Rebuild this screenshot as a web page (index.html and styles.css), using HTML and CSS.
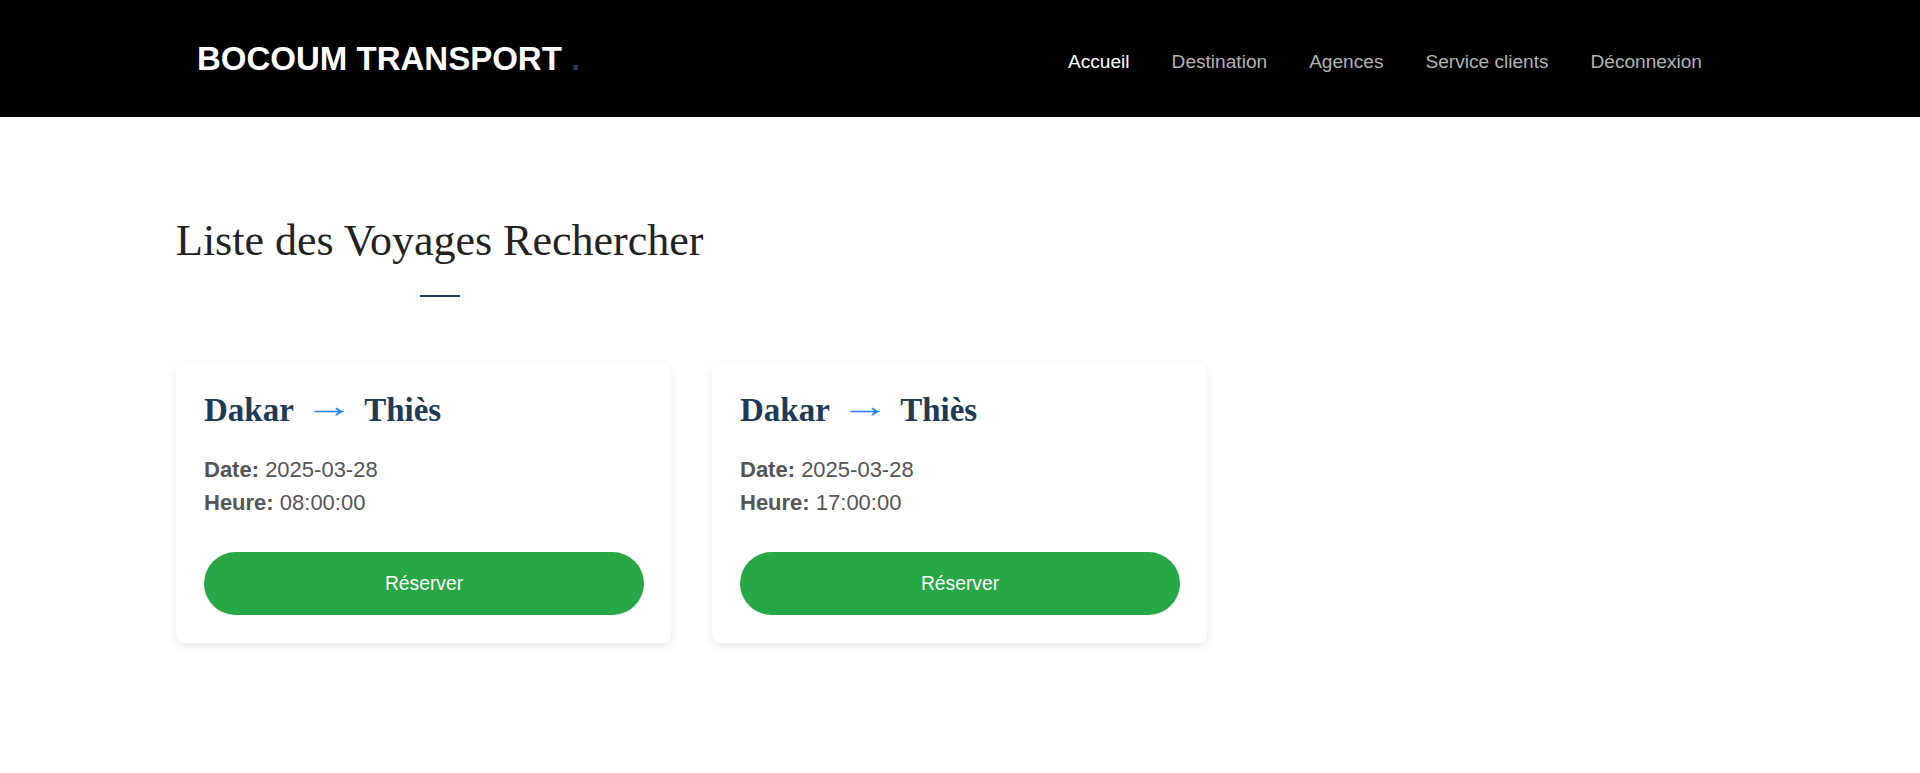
FILE: index.html
```html
<!DOCTYPE html>
<html lang="fr">
<head>
<meta charset="utf-8">
<title>Bocoum Transport</title>
<link rel="stylesheet" href="styles.css">
</head>
<body>
<header class="site-header">
  <a class="brand" href="#">BOCOUM TRANSPORT <span class="brand-dot">.</span></a>
  <nav class="main-nav">
    <a class="nav-link active" href="#">Accueil</a>
    <a class="nav-link" href="#">Destination</a>
    <a class="nav-link" href="#">Agences</a>
    <a class="nav-link" href="#">Service clients</a>
    <a class="nav-link" href="#">Déconnexion</a>
  </nav>
</header>
<main class="content">
  <h2 class="section-title">Liste des Voyages Rechercher</h2>
  <div class="trip-grid">
    <div class="trip-card">
      <h3 class="trip-route">Dakar <span class="arrow">→</span> Thiès</h3>
      <p class="trip-info"><strong>Date:</strong> 2025-03-28<br><strong>Heure:</strong> 08:00:00</p>
      <a class="btn-reserve" href="#">Réserver</a>
    </div>
    <div class="trip-card">
      <h3 class="trip-route">Dakar <span class="arrow">→</span> Thiès</h3>
      <p class="trip-info"><strong>Date:</strong> 2025-03-28<br><strong>Heure:</strong> 17:00:00</p>
      <a class="btn-reserve" href="#">Réserver</a>
    </div>
  </div>
</main>
</body>
</html>
```

FILE: styles.css
```css
* { box-sizing: border-box; }
html, body { margin: 0; padding: 0; }
body {
  background: #fff;
  font-family: "Liberation Sans", Arial, sans-serif;
  color: #212529;
}
.site-header {
  height: 117px;
  background: #000;
  display: flex;
  align-items: center;
  justify-content: space-between;
  padding: 0 197px 0 197px;
}
.brand {
  font-family: "Liberation Sans", Arial, sans-serif;
  font-weight: bold;
  font-size: 33px;
  color: #fff;
  text-decoration: none;
  line-height: 1;
  margin-top: 0;
}
.brand-dot { color: #1d3a5c; }
.main-nav {
  display: flex;
  align-items: center;
  margin-top: 6px;
}
.nav-link {
  font-size: 19.1px;
  color: #b3b3b3;
  text-decoration: none;
  padding: 0 21px;
}
.nav-link.active { color: #fff; }
.content {
  padding: 98px 0 80px 176px;
}
.section-title {
  display: inline-block;
  margin: 0;
  font-family: "Liberation Serif", "Times New Roman", serif;
  font-weight: normal;
  font-size: 44px;
  line-height: 1.2;
  color: #222;
  text-align: center;
}
.section-title::after {
  content: "";
  display: block;
  width: 40px;
  height: 2px;
  background: #1d3a5c;
  margin: 27px auto 0;
}
.trip-grid {
  display: grid;
  grid-template-columns: 495px 495px;
  column-gap: 41px;
  margin-top: 66px;
}
.trip-card {
  background: #fff;
  border-radius: 8px;
  box-shadow: 0 3px 10px rgba(0, 0, 0, 0.09);
  padding: 28px 27px 28px 28px;
}
.trip-route {
  margin: 0;
  font-family: "Liberation Serif", "Times New Roman", serif;
  font-weight: bold;
  font-size: 33px;
  line-height: 1.2;
  color: #1d3a56;
}
.arrow {
  display: inline-block;
  color: #1e88ff;
  font-weight: normal;
  margin: 0 20px 0 2px;
  transform: translateY(-4px) scaleX(1.48);
  transform-origin: left center;
}
.trip-info {
  margin: 23px 0 33px;
  font-size: 22px;
  line-height: 33px;
  color: #555;
}
.trip-info strong { color: #555; }
.btn-reserve {
  display: flex;
  align-items: center;
  justify-content: center;
  height: 63px;
  border-radius: 32px;
  background: #28a745;
  color: #fff;
  font-size: 19.3px;
  text-decoration: none;
}
```
